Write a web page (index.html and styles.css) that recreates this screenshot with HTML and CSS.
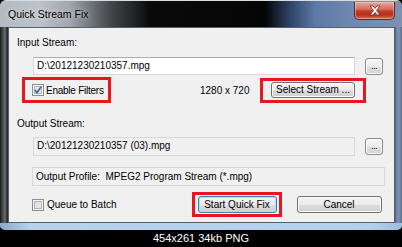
FILE: index.html
```html
<!DOCTYPE html>
<html>
<head>
<meta charset="utf-8">
<link rel="stylesheet" href="styles.css">
</head>
<body>
<div class="window">
  <div class="titlebar">
    <span class="title">Quick Stream Fix</span>
    <div class="close">
      <svg width="14" height="11" viewBox="0 0 14 11">
        <path d="M2 1 L5 1 L7 3.5 L9 1 L12 1 L8.5 5.5 L12 10 L9 10 L7 7.5 L5 10 L2 10 L5.5 5.5 Z" fill="#fff" stroke="#5a2a22" stroke-width="0.8" stroke-linejoin="round"/>
      </svg>
    </div>
  </div>
  <div class="middle">
    <div class="frame-left"></div>
    <div class="client">
      <div class="label l1">Input Stream:</div>
      <div class="row r1">
        <div class="field input">D:\20121230210357.mpg</div>
        <div class="browse">...</div>
      </div>
      <div class="row r2">
        <div class="hl hl-filters">
          <span class="check">
            <svg width="12" height="12" viewBox="0 0 12 12">
              <rect x="0.5" y="0.5" width="11" height="11" fill="#f4f4f4" stroke="#8e8f8f"/>
              <rect x="2.5" y="2.5" width="7" height="7" fill="#e4e6e8" stroke="#b4b8bc"/>
              <path d="M3 6 L5 8.6 L9.2 2.6" fill="none" stroke="#3f5a94" stroke-width="1.6"/>
            </svg>
          </span>
          <span class="ctext tight">Enable Filters</span>
        </div>
        <span class="res">1280 x 720</span>
        <div class="hl hl-select"><div class="btn btn-select">Select Stream ...</div></div>
      </div>
      <div class="label l2">Output Stream:</div>
      <div class="row r3">
        <div class="field output">D:\20121230210357 (03).mpg</div>
        <div class="browse">...</div>
      </div>
      <div class="field profile">Output Profile:&nbsp; MPEG2 Program Stream (*.mpg)</div>
      <div class="row r4">
        <span class="check">
          <svg width="12" height="12" viewBox="0 0 12 12">
            <rect x="0.5" y="0.5" width="11" height="11" fill="#f4f4f4" stroke="#8e8f8f"/>
            <rect x="2.5" y="2.5" width="7" height="7" fill="#e2e4e6" stroke="#b4b8bc"/>
          </svg>
        </span>
        <span class="ctext">Queue to Batch</span>
        <div class="hl hl-start"><div class="btn btn-default">Start Quick Fix</div></div>
        <div class="btn btn-cancel">Cancel</div>
      </div>
    </div>
    <div class="frame-right"></div>
  </div>
  <div class="frame-bottom"></div>
</div>
<div class="caption">454x261 34kb PNG</div>
</body>
</html>
```

FILE: styles.css
```css
* { box-sizing: border-box; }
html, body { margin: 0; padding: 0; }
body {
  width: 402px;
  height: 247px;
  background: #000;
  overflow: hidden;
  font-family: "Liberation Sans", Arial, sans-serif;
  font-size: 10px;
  color: #000;
}
.window {
  width: 402px;
  height: 230px;
  display: flex;
  flex-direction: column;
  border-radius: 6px 6px 5px 5px;
  overflow: hidden;
  background: linear-gradient(90deg, #9aa2aa 0, #3a3e42 3px, #2a2c2e 8px, #101010 120px, #060606 270px, #3a5480 300px, #6c84ac 340px, #7a8eb0 402px);
}
.titlebar {
  height: 27px;
  display: flex;
  align-items: flex-start;
  justify-content: space-between;
  padding: 0 8px 0 8px;
  background: linear-gradient(90deg, #b4bac2 0, #bcc2c8 40px, #a0a6ac 70px, #44484c 110px, #0a0a0a 150px, #050505 265px, #2e4468 290px, #5c78a6 315px, #7088b0 350px, #7c90b2 402px);
  border-top: 1px solid #d8dde2;
}
.title {
  margin-top: 7px;
  font-size: 10.5px;
  color: #000;
  text-shadow: 0 0 4px rgba(255,255,255,0.8);
}
.close {
  width: 41px;
  height: 18px;
  margin-top: 1px;
  margin-right: -1px;
  border: 1px solid #5a2a26;
  border-top: none;
  border-radius: 0 0 5px 5px;
  background: linear-gradient(#e8a89c 0%, #d87060 40%, #c03a22 55%, #b8301c 75%, #d8704c 100%);
  box-shadow: inset 0 0 0 1px rgba(255,220,210,0.45);
  display: flex;
  align-items: center;
  justify-content: center;
}
.middle {
  height: 196px;
  display: flex;
}
.frame-left {
  width: 8px;
  background: linear-gradient(90deg, #1a1a1a 0, #4a4e52 3px, #6a6e72 5px, #2a2c2e 7px);
}
.frame-right {
  width: 7px;
  background: linear-gradient(90deg, #34465e 0, #6e84aa 1px, #7c92b6 4px, #5a6c88 7px);
}
.client {
  width: 387px;
  background: #f0f0f0;
  border: 1px solid #54606c;
  display: flex;
  flex-direction: column;
  padding-top: 9px;
}
.frame-bottom {
  height: 7px;
  background: linear-gradient(90deg, #8aa8c8 0, #b8d2ec 30px, #b4d0ec 370px, #9ebcdc 402px);
}
.caption {
  height: 17px;
  color: #fff;
  font-size: 11px;
  text-align: center;
  line-height: 17px;
}
.label {
  height: 12px;
  line-height: 12px;
  padding-left: 8px;
}
.l2 { margin-top: 15px; }
.row {
  display: flex;
  align-items: center;
}
.r1 { margin-top: 8px; height: 18px; padding-left: 24px; }
.r2 { margin-top: 2px; height: 26px; }
.r3 { margin-top: 7px; height: 19px; padding-left: 24px; }
.r4 { margin-top: 6px; height: 25px; padding-left: 23px; }
.field {
  height: 100%;
  line-height: 16px;
  padding-left: 3px;
  white-space: nowrap;
}
.input {
  width: 322px;
  background: #fff;
  border: 1px solid #d6d8dc;
  border-top-color: #abadb3;
}
.output {
  width: 322px;
  border: 1px solid #d8d8d8;
  background: #f0f0f0;
}
.profile {
  margin-top: 11px;
  margin-left: 23px;
  width: 353px;
  height: 19px;
  line-height: 17px;
  border: 1px solid #d8d8d8;
  background: #f0f0f0;
}
.browse {
  width: 18px;
  height: 17px;
  margin-left: 10px;
  border: 1px solid #8a8a8a;
  border-radius: 3px;
  background: linear-gradient(#f6f6f6 0%, #ececec 50%, #dedede 51%, #d4d4d4 100%);
  box-shadow: inset 0 0 0 1px #fafafa;
  font-size: 9px;
  line-height: 14px;
  text-align: center;
  letter-spacing: -0.5px;
}
.hl {
  border: 3px solid #e8161e;
  display: flex;
  align-items: center;
}
.hl-filters {
  margin-left: 13px;
  width: 89px;
  height: 26px;
  padding-left: 7px;
}
.check {
  width: 12px;
  height: 12px;
  display: block;
  flex: none;
}
.check svg { display: block; }
.ctext { margin-left: 3px; white-space: nowrap; }
.tight { margin-left: 2px; letter-spacing: -0.25px; }
.res { margin-left: 89px; width: 45px; white-space: nowrap; }
.hl-select {
  margin-left: 15px;
  width: 106px;
  height: 25px;
  padding-left: 8px;
}
.btn {
  height: 16px;
  border: 1px solid #707070;
  border-radius: 3px;
  background: linear-gradient(#f2f2f2 0%, #ebebeb 50%, #dddddd 51%, #cfcfcf 100%);
  box-shadow: inset 0 0 0 1px #fcfcfc;
  text-align: center;
  line-height: 14px;
  white-space: nowrap;
}
.btn-select { width: 84px; }
.hl-start {
  margin-left: 75px;
  width: 90px;
  height: 25px;
  padding-left: 3px;
}
.btn-default {
  width: 79px;
  height: 17px;
  line-height: 15px;
  border-color: #3c7fb1;
  box-shadow: inset 0 0 0 1px #a8e4f8;
}
.btn-cancel {
  margin-left: 15px;
  width: 85px;
  height: 17px;
  line-height: 15px;
}
```
